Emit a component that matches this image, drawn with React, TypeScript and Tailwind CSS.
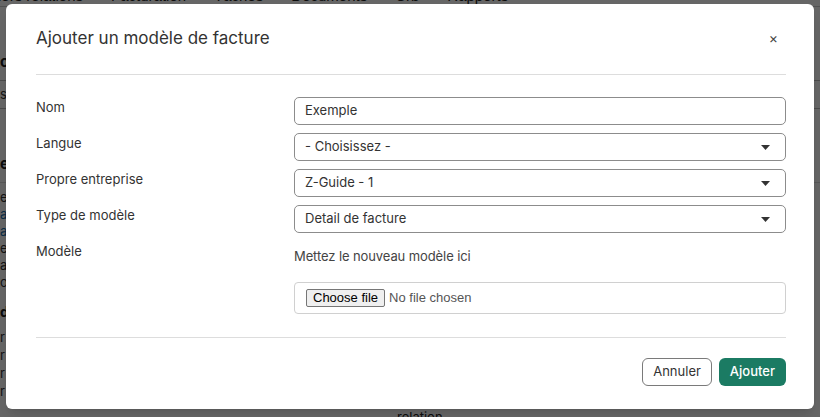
import React from 'react';

const font = { fontFamily: 'Inter, "Noto Sans", sans-serif' };
const arial = { fontFamily: '"Liberation Sans", Arial, sans-serif' };

function Caret() {
  return (
    <svg className="h-[5px] w-[9px] text-[#333]" viewBox="0 0 9 5" fill="currentColor">
      <path d="M0 0h9L4.5 5z" />
    </svg>
  );
}

function SelectBox({ value }: { value: string }) {
  return (
    <div className="flex h-[28px] items-center justify-between rounded-[5px] border border-[#8c8c8c] bg-white pl-[10px] pr-[15px] text-[13px] text-[#333]">
      <span>{value}</span>
      <Caret />
    </div>
  );
}

function Row({ label, children }: { label: string; children: React.ReactNode }) {
  return (
    <div className="grid grid-cols-[258px_1fr]">
      <div className="text-[13px] leading-[20px] text-[#333]">{label}</div>
      <div>{children}</div>
    </div>
  );
}

export default function App() {
  return (
    <div className="relative h-[417px] w-[820px] overflow-hidden bg-white" style={font}>
      {/* page behind the dialog */}
      <div className="-mt-[13px] flex h-[20px] items-center gap-[28px] border-b border-[#ccc] text-[13px] text-[#222]" style={arial}>
        <span className="-ml-[2px] text-[15px]">iers relations</span>
        <span className="text-[15px]">Facturation</span>
        <span className="text-[15px]">Tâches</span>
        <span className="text-[15px]">Documents</span>
        <span className="text-[15px]">Crb</span>
        <span className="text-[15px]">Rapports</span>
      </div>
      <div className="mt-[44px] border-b border-[#bbb] pb-[6px] text-[15px] font-bold text-[#222]">o</div>
      <div className="border-b border-[#bbb] py-[4px] text-[13px] text-[#333]">s</div>
      <div className="mt-[44px] border-b border-[#ddd] pb-[6px] text-[15px] font-bold text-[#222]">e</div>
      <div className="mt-[6px] flex flex-col text-[13px] leading-[17px] text-[#333]">
        <span>e</span>
        <span className="text-[#1a6fb0]">a</span>
        <span className="text-[#1a6fb0]">a</span>
        <span>e</span>
        <span>a</span>
        <span>ot</span>
      </div>
      <div className="mt-[10px] text-[14px] font-bold text-[#222]">d</div>
      <div className="mt-[6px] flex flex-col text-[13px] leading-[18px] text-[#333]">
        <span>r</span>
        <span>r</span>
        <span>r</span>
        <span>r</span>
      </div>
      <div className="pl-[397px] pt-[8px] text-[13px] text-[#222]">relation</div>

      <div className="absolute inset-0 bg-black/60" />

      {/* dialog */}
      <div className="absolute left-[6px] top-[4px] flex w-[808px] flex-col rounded-[6px] bg-white pl-[30px] pr-[28px] shadow-lg">
        <div className="flex items-center justify-between pb-[24px] pt-[22px]">
          <h2 className="text-[17px] font-normal leading-[24px] text-[#333]">Ajouter un modèle de facture</h2>
          <span className="mr-[8px] text-[14px] leading-none text-[#444]">×</span>
        </div>
        <div className="border-t border-[#ddd]" />

        <div className="flex flex-col gap-[8px] pb-[23px] pt-[22px]">
          <Row label="Nom">
            <div className="flex h-[28px] items-center rounded-[5px] border border-[#8c8c8c] pl-[10px] text-[13px] text-[#333]">
              Exemple
            </div>
          </Row>
          <Row label="Langue">
            <SelectBox value="- Choisissez -" />
          </Row>
          <Row label="Propre entreprise">
            <SelectBox value="Z-Guide - 1" />
          </Row>
          <Row label="Type de modèle">
            <SelectBox value="Detail de facture" />
          </Row>
          <Row label="Modèle">
            <div className="flex flex-col gap-[13px]">
              <div className="flex h-[28px] items-center pt-[3px] text-[13px] tracking-[-0.1px] text-[#444]">
                Mettez le nouveau modèle ici
              </div>
              <div className="flex h-[32px] items-center gap-[4px] rounded-[4px] border border-[#d0d0d0] pl-[11px]" style={arial}>
                <span className="flex h-[18px] items-center rounded-[2px] border border-[#767676] bg-[#efefef] px-[6px] text-[13px] text-black">
                  Choose file
                </span>
                <span className="text-[13px] text-[#555]">No file chosen</span>
              </div>
            </div>
          </Row>
        </div>
        <div className="border-t border-[#ddd]" />

        <div className="flex justify-end gap-[7px] pb-[23px] pt-[20px]">
          <button className="h-[28px] rounded-[6px] border border-[#7a7a7a] bg-white px-[10px] text-[13px] text-[#333]">
            Annuler
          </button>
          <button className="h-[28px] rounded-[6px] bg-[#1b7b63] px-[11px] text-[13px] font-medium text-white">
            Ajouter
          </button>
        </div>
      </div>
    </div>
  );
}
